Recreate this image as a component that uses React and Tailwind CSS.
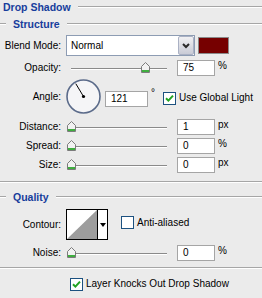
import React from 'react';

const FONT = { fontFamily: '"Liberation Sans", Arial, sans-serif' };

function Rule( { className = '' } ) {
    return (
        <div className={ `h-[2px] border-t border-[#a6a6a6] border-b border-b-white ${ className }` } />
    );
}

function Heading( { text, indent } ) {
    return (
        <div className="flex items-center h-[14px]">
            { indent ? <Rule className="w-[6px] mr-[7px]" /> : <div className="w-[3px]" /> }
            <span className="text-[10.5px] font-bold text-[#173d9c] leading-none">{ text }</span>
            <Rule className="flex-1 ml-[7px]" />
        </div>
    );
}

function Label( { children } ) {
    return <div className="w-[61px] shrink-0 text-right text-[10px] leading-none">{ children }</div>;
}

function Thumb() {
    return (
        <svg width="9" height="11" viewBox="0 0 9 11">
            <path d="M4.5 0.5 L8.5 4.5 V10.5 H0.5 V4.5 Z" fill="#f2f2f2" stroke="#7b7b7b" />
            <rect x="1" y="8" width="7" height="2" fill="#3fae3f" />
        </svg>
    );
}

function Slider( { value } ) {
    const pos = ( value / 100 ) * 99;
    return (
        <div className="relative w-[100px] h-[12px] ml-[6px]">
            <div className="absolute left-[4px] right-0 top-[6px] h-[2px] border-t border-[#8a8a8a] border-b border-b-white" />
            <div className="absolute top-0" style={ { left: pos } }>
                <Thumb />
            </div>
        </div>
    );
}

function NumBox( { value, className = '' } ) {
    return (
        <div className={ `h-[16px] bg-white border border-[#a5a5a5] text-[10px] leading-none flex items-center pl-[5px] ${ className }` }>
            { value }
        </div>
    );
}

function Check( { className = '' } ) {
    return (
        <div className={ `w-[13px] h-[13px] bg-white border border-[#1c5180] flex items-center justify-center shrink-0 ${ className }` }>
            <svg width="9" height="9" viewBox="0 0 9 9">
                <path d="M1 4.2 L3.4 6.6 L8 1.6" fill="none" stroke="#22a322" strokeWidth="2" />
            </svg>
        </div>
    );
}

function SliderRow( { label, value, pos, unit, className = '' } ) {
    return (
        <div className={ `flex items-center h-[17px] ${ className }` }>
            <Label>{ label }</Label>
            <Slider value={ pos } />
            <NumBox value={ value } className="w-[38px] ml-[10px]" />
            <span className="ml-[3px] text-[10px] leading-none -mt-[4px]">{ unit }</span>
        </div>
    );
}

function Dial() {
    const a = ( 121 * Math.PI ) / 180;
    const x2 = 17.5 + Math.cos( a ) * 15;
    const y2 = 17.5 - Math.sin( a ) * 15;
    return (
        <svg width="36" height="36" viewBox="0 0 36 36">
            <circle cx="17.5" cy="17.5" r="16.5" fill="#f5f5f7" stroke="#5b6b8a" strokeWidth="1.6" />
            <line x1="17.5" y1="17.5" x2={ x2 } y2={ y2 } stroke="#000" strokeWidth="1" />
            <circle cx="17.5" cy="17.5" r="1.6" fill="#000" />
        </svg>
    );
}

export default function App() {
    return (
        <div className="w-[262px] h-[298px] bg-[#ebebeb] text-black overflow-hidden" style={ FONT }>
            <Heading text="Drop Shadow" />
            <div className="mt-[3px]">
                <Heading text="Structure" indent />
            </div>

            {/* Blend mode */}
            <div className="flex items-center h-[21px] mt-[4px]">
                <Label>Blend Mode:</Label>
                <div className="ml-[5px] w-[129px] h-[21px] bg-white border border-[#8d9cb3] flex items-center">
                    <span className="flex-1 pl-[4px] text-[10px] leading-none">Normal</span>
                    <div className="w-[16px] h-[19px] bg-gradient-to-b from-[#f1f1f3] to-[#c9cbd6] border border-[#aab1c4] rounded-[2px] flex items-center justify-center">
                        <svg width="8" height="6" viewBox="0 0 8 6">
                            <path d="M1 1 L4 4 L7 1" fill="none" stroke="#2a2a2a" strokeWidth="2" />
                        </svg>
                    </div>
                </div>
                <div className="ml-[3px] w-[31px] h-[17px] bg-[#760000] border border-[#8a8a8a]" />
            </div>

            <SliderRow label="Opacity:" value="75" pos={ 75 } unit="%" className="mt-[3px]" />

            {/* Angle */}
            <div className="flex items-center h-[36px] mt-[3px]">
                <Label>Angle:</Label>
                <div className="ml-[5px]">
                    <Dial />
                </div>
                <NumBox value="121" className="w-[43px] ml-[3px] mt-[3px]" />
                <span className="ml-[3px] text-[10px] leading-none -mt-[8px]">°</span>
                <Check className="ml-[8px] mt-[2px]" />
                <span className="ml-[3px] text-[10px] leading-none mt-[2px]">Use Global Light</span>
            </div>

            <SliderRow label="Distance:" value="1" pos={ 0 } unit="px" className="mt-[3px]" />
            <SliderRow label="Spread:" value="0" pos={ 0 } unit="%" className="mt-[2px]" />
            <SliderRow label="Size:" value="0" pos={ 0 } unit="px" className="mt-[2px]" />

            <Rule className="mt-[8px]" />

            <div className="mt-[7px]">
                <Heading text="Quality" indent />
            </div>

            {/* Contour */}
            <div className="flex items-center h-[31px] mt-[5px]">
                <Label>Contour:</Label>
                <div className="ml-[5px] w-[42px] h-[31px] bg-white border border-black flex">
                    <svg width="30" height="29" viewBox="0 0 30 29" className="shrink-0">
                        <polygon points="0,29 30,0 30,29" fill="#9d9d9d" />
                    </svg>
                    <div className="flex-1 border-l border-black flex items-center justify-center">
                        <svg width="6" height="4" viewBox="0 0 6 4">
                            <polygon points="0,0 6,0 3,4" fill="#000" />
                        </svg>
                    </div>
                </div>
                <div className="ml-[13px] -mt-[4px] w-[13px] h-[13px] bg-white border border-[#1c5180]" />
                <span className="ml-[3px] -mt-[4px] text-[10px] leading-none">Anti-aliased</span>
            </div>

            <SliderRow label="Noise:" value="0" pos={ 0 } unit="%" className="mt-[4px]" />

            <Rule className="mt-[6px]" />

            <div className="flex items-center h-[14px] mt-[8px] pl-[70px]">
                <Check />
                <span className="ml-[3px] text-[10px] leading-none">Layer Knocks Out Drop Shadow</span>
            </div>
        </div>
    );
}
